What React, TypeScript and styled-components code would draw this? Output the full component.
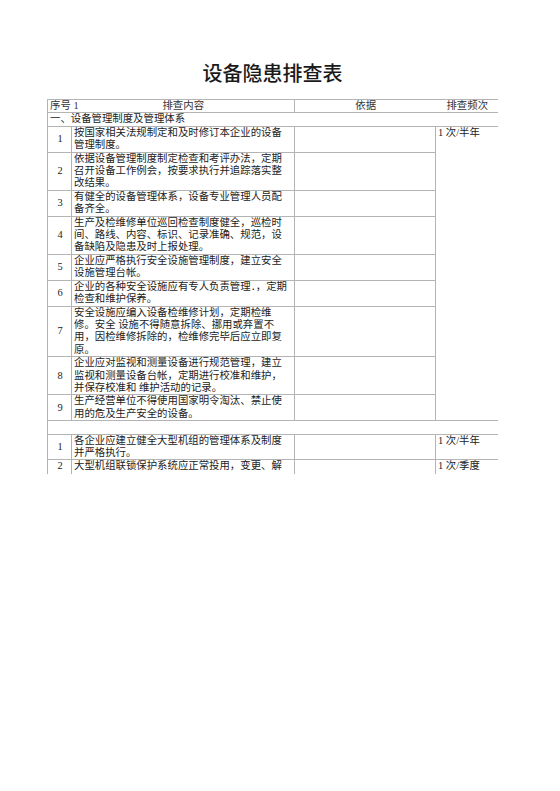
import React from "react";
import styled, { createGlobalStyle } from "styled-components";

const Global = createGlobalStyle`
  html, body { margin: 0; padding: 0; background: #ffffff; }
  body { font-family: "Liberation Serif", "Noto Sans CJK SC", serif; }
`;

const Page = styled.div`
  width: 560px;
  height: 791px;
  padding: 63px 0 0 47px;
  box-sizing: border-box;
  background: #fff;
`;

const Column = styled.div`
  width: 451px;
  display: flex;
  flex-direction: column;
`;

const Title = styled.h1`
  margin: 0 0 16px;
  font-family: "Noto Sans CJK SC", "Noto Sans", sans-serif;
  font-size: 20px;
  line-height: 20px;
  font-weight: 500;
  color: #1a1a1a;
  text-align: center;
`;

const Sheet = styled.div`
  height: 375px;
  overflow: hidden;
`;

const Table = styled.table`
  width: 451px;
  table-layout: fixed;
  border-collapse: collapse;
  font-family: "Liberation Serif", "Noto Sans CJK SC", serif;
  font-size: 10.4px;
  line-height: 12.4px;
  color: #222;
`;

const Line = "1px solid #b4b4b4";

const Cell = styled.td<{
  $align?: "left" | "center";
  $top?: boolean;
  $noLeft?: boolean;
  $noRight?: boolean;
  $muted?: boolean;
  $spill?: boolean;
  $tail?: boolean;
}>`
  border: ${Line};
  ${(p) => (p.$noLeft ? "border-left: none;" : "")}
  ${(p) => (p.$noRight ? "border-right: none;" : "")}
  padding: 0 1px ${(p) => (p.$tail ? "14px" : "0")} 2px;
  text-align: ${(p) => p.$align ?? "left"};
  vertical-align: ${(p) => (p.$top ? "top" : "middle")};
  color: ${(p) => (p.$muted ? "#333" : "#222")};
  white-space: nowrap;
  overflow: ${(p) => (p.$spill ? "visible" : "hidden")};
`;

const TextLine = styled.span`
  display: block;
  white-space: nowrap;
`;

type Item = { no: string; lines: string[] };

const part1: Item[] = [
  { no: "1", lines: ["按国家相关法规制定和及时修订本企业的设备", "管理制度。"] },
  { no: "2", lines: ["依据设备管理制度制定检查和考评办法，定期", "召开设备工作例会，按要求执行并追踪落实整", "改结果。"] },
  { no: "3", lines: ["有健全的设备管理体系，设备专业管理人员配", "备齐全。"] },
  { no: "4", lines: ["生产及检维修单位巡回检查制度健全，巡检时", "间、路线、内容、标识、记录准确、规范，设", "备缺陷及隐患及时上报处理。"] },
  { no: "5", lines: ["企业应严格执行安全设施管理制度，建立安全", "设施管理台帐。"] },
  { no: "6", lines: ["企业的各种安全设施应有专人负责管理．，定期", "检查和维护保养。"] },
  { no: "7", lines: ["安全设施应编入设备检维修计划，定期检维", "修。安全 设施不得随意拆除、挪用或弃置不", "用，因检维修拆除的，检维修完毕后应立即复", "原。"] },
  { no: "8", lines: ["企业应对监视和测量设备进行规范管理，建立", "监视和测量设备台帐，定期进行校准和维护，", "并保存校准和 维护活动的记录。"] },
  { no: "9", lines: ["生产经营单位不得使用国家明令淘汰、禁止使", "用的危及生产安全的设备。"] },
];

const part2: { no: string; lines: string[]; freq: string; tail?: boolean }[] = [
  { no: "1", lines: ["各企业应建立健全大型机组的管理体系及制度", "并严格执行。"], freq: "1 次/半年" },
  { no: "2", lines: ["大型机组联锁保护系统应正常投用，变更、解"], freq: "1 次/季度", tail: true },
];

const Lines = ({ lines }: { lines: string[] }) => (
  <>
    {lines.map((l, i) => (
      <TextLine key={i}>{l}</TextLine>
    ))}
  </>
);

export default function App() {
  return (
    <>
      <Global />
      <Page>
        <Column>
          <Title>设备隐患排查表</Title>
          <Sheet>
            <Table>
              <colgroup>
                <col style={{ width: 24 }} />
                <col style={{ width: 223 }} />
                <col style={{ width: 141 }} />
                <col style={{ width: 63 }} />
              </colgroup>
              <tbody>
                <tr>
                  <Cell $noRight $muted $spill>序号 1</Cell>
                  <Cell $noLeft $align="center" $muted>排查内容</Cell>
                  <Cell $noRight $align="center" $muted>依据</Cell>
                  <Cell $noLeft $align="center" $muted>排查频次</Cell>
                </tr>
                <tr>
                  <Cell colSpan={4}>一、设备管理制度及管理体系</Cell>
                </tr>
                {part1.map((it, i) => (
                  <tr key={it.no}>
                    <Cell $align="center">{it.no}</Cell>
                    <Cell>
                      <Lines lines={it.lines} />
                    </Cell>
                    <Cell />
                    {i === 0 && (
                      <Cell rowSpan={part1.length} $top>
                        1 次/半年
                      </Cell>
                    )}
                  </tr>
                ))}
                <tr>
                  <Cell colSpan={4}>&nbsp;</Cell>
                </tr>
                {part2.map((it) => (
                  <tr key={"b" + it.no}>
                    <Cell $align="center" $top={it.tail} $tail={it.tail}>{it.no}</Cell>
                    <Cell $tail={it.tail}>
                      <Lines lines={it.lines} />
                    </Cell>
                    <Cell $tail={it.tail} />
                    <Cell $top $tail={it.tail}>{it.freq}</Cell>
                  </tr>
                ))}
              </tbody>
            </Table>
          </Sheet>
        </Column>
      </Page>
    </>
  );
}
